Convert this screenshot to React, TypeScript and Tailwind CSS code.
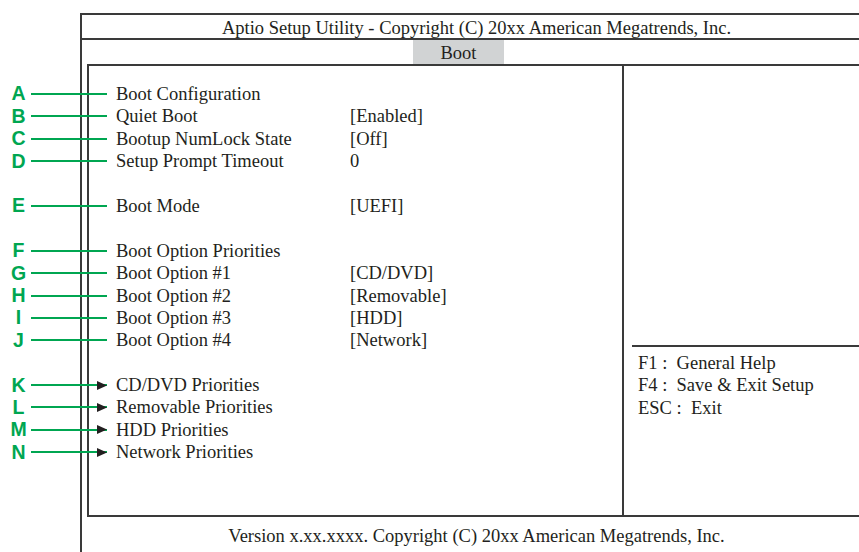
import React from "react";

type Row = { k?: string; label?: string; value?: string; arrow?: boolean };

const rows: Row[] = [
  { k: "A", label: "Boot Configuration" },
  { k: "B", label: "Quiet Boot", value: "[Enabled]" },
  { k: "C", label: "Bootup NumLock State", value: "[Off]" },
  { k: "D", label: "Setup Prompt Timeout", value: "0" },
  {},
  { k: "E", label: "Boot Mode", value: "[UEFI]" },
  {},
  { k: "F", label: "Boot Option Priorities" },
  { k: "G", label: "Boot Option #1", value: "[CD/DVD]" },
  { k: "H", label: "Boot Option #2", value: "[Removable]" },
  { k: "I", label: "Boot Option #3", value: "[HDD]" },
  { k: "J", label: "Boot Option #4", value: "[Network]" },
  {},
  { k: "K", label: "CD/DVD Priorities", arrow: true },
  { k: "L", label: "Removable Priorities", arrow: true },
  { k: "M", label: "HDD Priorities", arrow: true },
  { k: "N", label: "Network Priorities", arrow: true },
];

function Annot({ k, arrow }: { k: string; arrow?: boolean }) {
  return (
    <>
      <span className="absolute left-[-104px] top-0 w-[13px] h-[22.4px] flex items-center justify-center text-[19.5px] leading-none font-semibold text-[#00a651] font-['Liberation_Sans',sans-serif] z-10">
        {k}
      </span>
      <span className="absolute left-[-85px] top-[10px] w-[76px] h-[2px] bg-[#00a651] z-10" />
      {arrow && (
        <svg
          className="absolute left-[-19px] top-[6.5px] z-20"
          width="10"
          height="9"
          viewBox="0 0 10 9"
        >
          <polygon points="0,0 10,4.5 0,9" fill="#231f20" />
        </svg>
      )}
    </>
  );
}

export default function App() {
  return (
    <div className="w-[859px] h-[552px] overflow-hidden bg-white relative font-['Liberation_Serif',serif] text-[#231f20]">
      <div className="ml-[80px] mt-[13px] w-[791px] h-[539px] border-l-2 border-t-2 border-[#3a3a3a] flex flex-col">
        <div className="h-[25px] shrink-0 pt-[3px] flex items-center justify-center text-[18.5px] leading-none border-b-2 border-[#3a3a3a]">
          Aptio Setup Utility - Copyright (C) 20xx American Megatrends, Inc.
        </div>
        <div className="h-[24px] shrink-0 flex">
          <div className="ml-[331px] w-[91px] h-full pt-[2px] bg-[#d1d3d4] flex items-center justify-center text-[18.5px] leading-none">
            Boot
          </div>
        </div>
        <div className="ml-[5px] h-[453px] shrink-0 flex border-t-2 border-l-2 border-b-2 border-[#3a3a3a]">
          <div className="w-[533px] pl-[27px] pt-[17px] text-[18.5px] leading-[22.4px]">
            {rows.map((r, i) => (
              <div key={i} className="relative h-[22.4px] flex">
                {r.k && <Annot k={r.k} arrow={r.arrow} />}
                <span className="w-[234px] whitespace-nowrap">{r.label}</span>
                <span className="whitespace-nowrap">{r.value}</span>
              </div>
            ))}
          </div>
          <div className="flex-1 border-l-2 border-[#3a3a3a] flex flex-col">
            <div className="mt-[279px] ml-[8px] mr-[11px] h-[2px] bg-[#3a3a3a]" />
            <div className="pl-[14px] pt-[5px] text-[18.5px] leading-[22.4px] whitespace-pre">
              <div>F1 :  General Help</div>
              <div>F4 :  Save &amp; Exit Setup</div>
              <div>ESC :  Exit</div>
            </div>
          </div>
        </div>
        <div className="h-[34px] shrink-0 pt-[5px] flex items-center justify-center text-[18.5px] leading-none">
          Version x.xx.xxxx. Copyright (C) 20xx American Megatrends, Inc.
        </div>
      </div>
    </div>
  );
}
